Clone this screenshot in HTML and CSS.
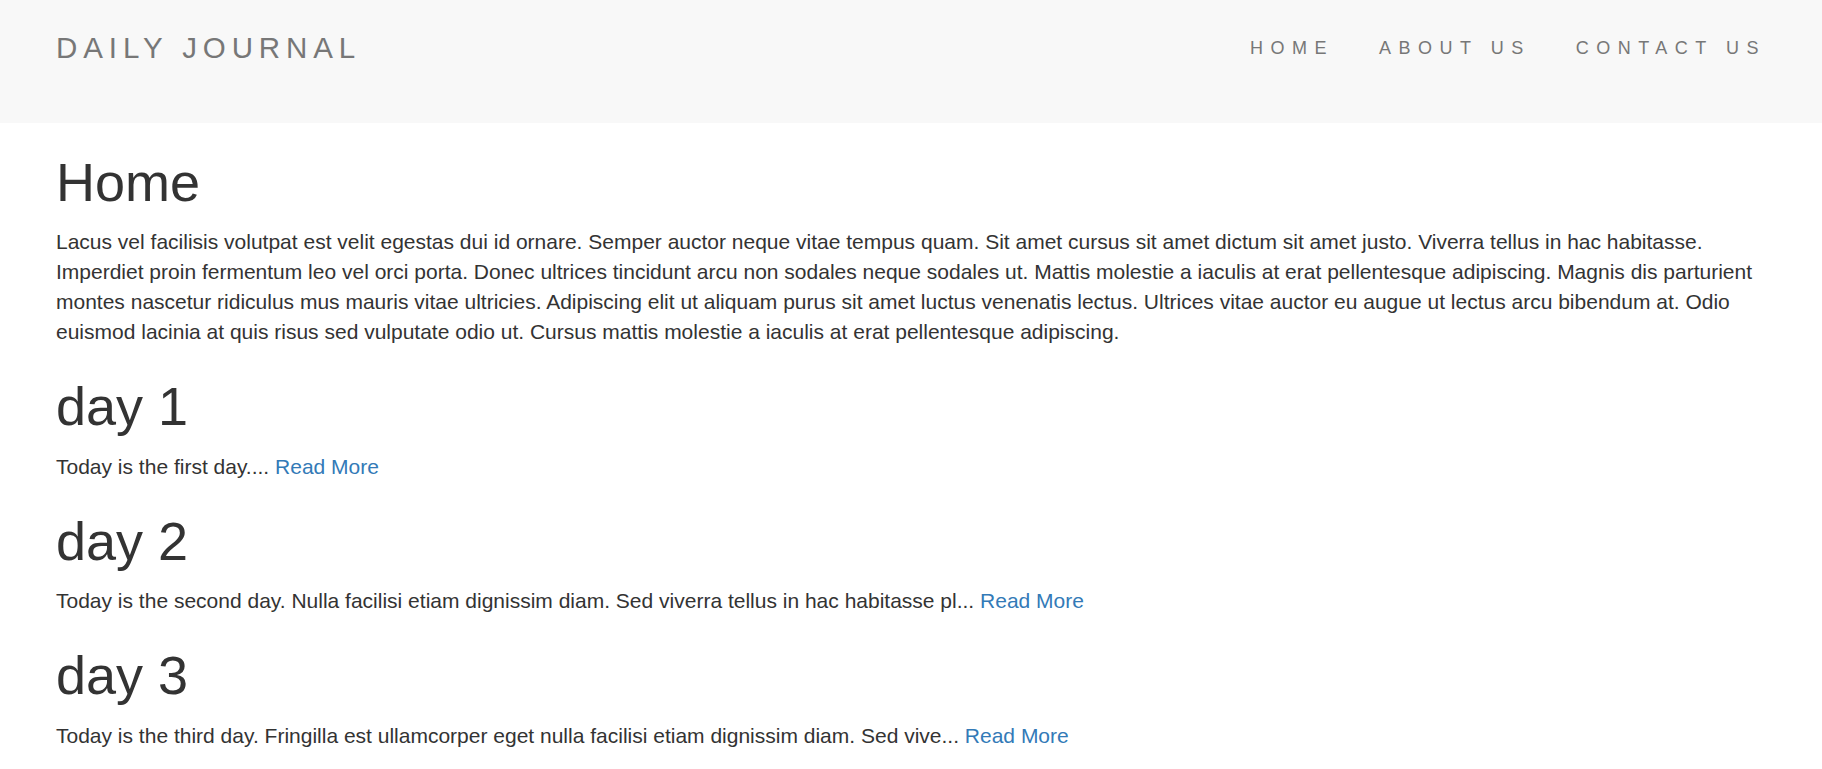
FILE: index.html
```html
<!DOCTYPE html>
<html lang="en">
<head>
<meta charset="utf-8">
<title>Daily Journal</title>
<link rel="stylesheet" href="styles.css">
</head>
<body>
<nav class="navbar">
  <div class="container navbar-inner">
    <a class="brand" href="#">DAILY JOURNAL</a>
    <ul class="nav">
      <li><a href="#">HOME</a></li>
      <li><a href="#">ABOUT US</a></li>
      <li><a href="#">CONTACT US</a></li>
    </ul>
  </div>
</nav>
<main class="container">
  <h1>Home</h1>
  <p>Lacus vel facilisis volutpat est velit egestas dui id ornare. Semper auctor neque vitae tempus quam. Sit amet cursus sit amet dictum sit amet justo. Viverra tellus in hac habitasse. Imperdiet proin fermentum leo vel orci porta. Donec ultrices tincidunt arcu non sodales neque sodales ut. Mattis molestie a iaculis at erat pellentesque adipiscing. Magnis dis parturient montes nascetur ridiculus mus mauris vitae ultricies. Adipiscing elit ut aliquam purus sit amet luctus venenatis lectus. Ultrices vitae auctor eu augue ut lectus arcu bibendum at. Odio euismod lacinia at quis risus sed vulputate odio ut. Cursus mattis molestie a iaculis at erat pellentesque adipiscing.</p>

  <h1>day 1</h1>
  <p>Today is the first day.... <a href="#">Read More</a></p>

  <h1>day 2</h1>
  <p>Today is the second day. Nulla facilisi etiam dignissim diam. Sed viverra tellus in hac habitasse pl... <a href="#">Read More</a></p>

  <h1>day 3</h1>
  <p>Today is the third day. Fringilla est ullamcorper eget nulla facilisi etiam dignissim diam. Sed vive... <a href="#">Read More</a></p>
</main>
</body>
</html>
```
FILE: styles.css
```css
html, body {
  margin: 0;
  padding: 0;
}

body {
  font-family: "Liberation Sans", Arial, Helvetica, sans-serif;
  font-size: 21px;
  line-height: 30px;
  color: #333333;
  background: #ffffff;
}

a {
  color: #337ab7;
  text-decoration: none;
}

.container {
  width: 1755px;
  margin: 0 auto;
  padding: 0 22.5px;
  box-sizing: border-box;
}

.navbar {
  background: #f8f8f8;
  height: 123px;
  margin-bottom: 30px;
}

.navbar-inner {
  display: flex;
  justify-content: space-between;
  align-items: flex-start;
}

.brand {
  display: block;
  padding-top: 33px;
  font-size: 29.5px;
  line-height: 30px;
  letter-spacing: 5.9px;
  color: #777777;
}

.nav {
  display: flex;
  list-style: none;
  margin: 0 -22.5px 0 0;
  padding: 0;
}

.nav a {
  display: block;
  padding: 39px 22.5px 0;
  font-size: 18px;
  line-height: 18px;
  letter-spacing: 7.5px;
  color: #777777;
}

h1 {
  font-size: 54px;
  font-weight: 400;
  line-height: 1.1;
  margin: 30px 0 15px;
}

p {
  margin: 0 0 15px;
}
```
